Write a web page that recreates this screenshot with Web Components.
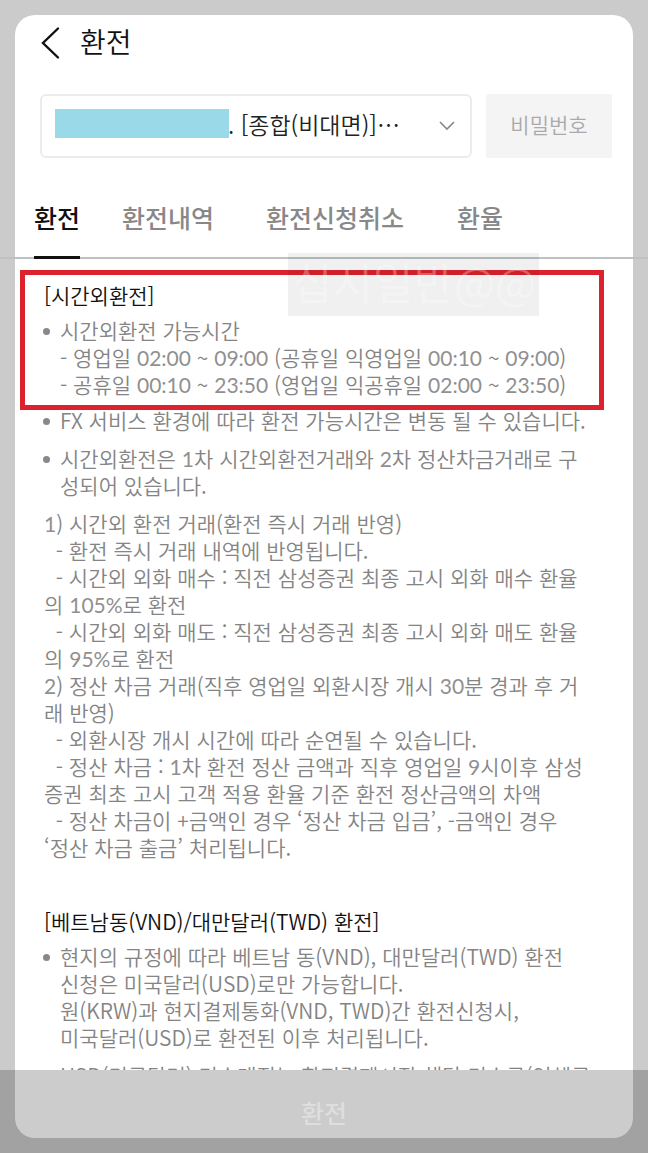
<!DOCTYPE html>
<html lang="ko">
<head>
<meta charset="utf-8">
<meta name="viewport" content="width=device-width, initial-scale=1">
<title>환전</title>
<style>
  body { margin: 0; font-family: "Noto Sans CJK KR", sans-serif; color: #848484; background: #cbcbcb; }
</style>
</head>
<body>
<fx-screen>
  <fx-header slot="header">환전</fx-header>
  <fx-account slot="header"></fx-account>
  <fx-tabs slot="header"></fx-tabs>
  <fx-section marked>
    <span slot="title">[시간외환전]</span>
    <fx-item>시간외환전 가능시간<br>- 영업일 02:00 ~ 09:00 (공휴일 익영업일 00:10 ~ 09:00)<br>- 공휴일 00:10 ~ 23:50 (영업일 익공휴일 02:00 ~ 23:50)</fx-item>
  </fx-section>
  <fx-section>
    <fx-item>FX 서비스 환경에 따라 환전 가능시간은 변동 될 수 있습니다.</fx-item>
    <fx-item>시간외환전은 1차 시간외환전거래와 2차 정산차금거래로 구<br>성되어 있습니다.</fx-item>
    <fx-item plain>1) 시간외 환전 거래(환전 즉시 거래 반영)<br>&nbsp; - 환전 즉시 거래 내역에 반영됩니다.<br>&nbsp; - 시간외 외화 매수 : 직전 삼성증권 최종 고시 외화 매수 환율<br>의 105%로 환전<br>&nbsp; - 시간외 외화 매도 : 직전 삼성증권 최종 고시 외화 매도 환율<br>의 95%로 환전<br>2) 정산 차금 거래(직후 영업일 외환시장 개시 30분 경과 후 거<br>래 반영)<br>&nbsp; - 외환시장 개시 시간에 따라 순연될 수 있습니다.<br>&nbsp; - 정산 차금 : 1차 환전 정산 금액과 직후 영업일 9시이후 삼성<br>증권 최초 고시 고객 적용 환율 기준 환전 정산금액의 차액<br>&nbsp; - 정산 차금이 +금액인 경우 ‘정산 차금 입금’, -금액인 경우<br>‘정산 차금 출금’ 처리됩니다.</fx-item>
  </fx-section>
  <fx-section spaced>
    <span slot="title">[베트남동(VND)/대만달러(TWD) 환전]</span>
    <fx-item>현지의 규정에 따라 베트남 동(VND), 대만달러(TWD) 환전<br>신청은 미국달러(USD)로만 가능합니다.<br>원(KRW)과 현지결제통화(VND, TWD)간 환전신청시,<br>미국달러(USD)로 환전된 이후 처리됩니다.</fx-item>
    <fx-item continued>USD(미국달러) 미수매직는 환전결제시장 해당 미수금(연체금</fx-item>
  </fx-section>
  <fx-toast slot="overlay">십시일반@@</fx-toast>
  <fx-submit slot="overlay">환전</fx-submit>
</fx-screen>
<script>
const define = (name, html, setup) => {
  const template = document.createElement('template');
  template.innerHTML = html;
  customElements.define(name, class extends HTMLElement {
    constructor() {
      super();
      this.attachShadow({ mode: 'open' }).append(template.content.cloneNode(true));
    }
    connectedCallback() {
      if (setup) setup(this);
    }
  });
};

define('fx-screen', `
<style>
  :host { display: flex; height: 100vh; box-sizing: border-box; padding: 15px; position: relative; overflow: hidden; }
  .card { flex: 1; min-width: 0; display: flex; flex-direction: column; background: #fff; border-radius: 20px; padding-bottom: 68px; box-sizing: border-box; }
  main { flex: 1; min-height: 0; overflow: hidden; padding: 23px 20px 0 29px; }
</style>
<div class="card"><slot name="header"></slot><main><slot></slot></main></div>
<slot name="overlay"></slot>`);

define('fx-header', `
<style>
  :host { display: flex; align-items: center; gap: 20px; height: 56px; padding-left: 25px; color: #111; }
  button { border: 0; padding: 0; background: none; width: 20px; height: 34px; display: block; }
  svg { display: block; }
  h1 { margin: 0; padding-bottom: 4px; font: 350 28px/36px "Noto Sans CJK KR", sans-serif; }
</style>
<button type="button" aria-label="뒤로"><svg width="20" height="34" viewBox="0 0 20 34" fill="none" stroke="#111" stroke-width="2.4" stroke-linecap="round"><path d="M18 2.500 3 17l15 14.500"/></svg></button>
<h1><slot></slot></h1>`);

define('fx-account', `
<style>
  :host { display: flex; gap: 14px; padding: 23px 21px 0 25px; }
  .pick { flex: 1; position: relative; min-width: 0; }
  select, input { display: block; width: 100%; height: 64px; box-sizing: border-box; margin: 0; font: 350 23px "Noto Sans CJK KR", sans-serif; }
  select { appearance: none; border: 2px solid #ececec; border-radius: 6px; background: #fff; padding: 0 60px 4px 186px; color: #222; opacity: 1; }
  .mask { position: absolute; left: 15px; top: 15px; width: 174px; height: 29px; background: #9ad9e8; }
  svg { position: absolute; right: 16px; top: 26px; }
  input { width: 126px; border: 0; border-radius: 2px; background: #f4f4f4; padding: 0 0 4px; text-align: center; font-size: 21px; }
  input::placeholder { color: #aaa; opacity: 1; }
</style>
<div class="pick">
  <select aria-label="계좌"><option>. [종합(비대면)]…</option></select>
  <span class="mask"></span>
  <svg width="18" height="12" viewBox="0 0 18 12" fill="none" stroke="#888" stroke-width="1.6"><path d="M2 2l7 7 7-7"/></svg>
</div>
<input type="password" placeholder="비밀번호" aria-label="비밀번호">`);

define('fx-tabs', `
<style>
  :host { display: block; margin: 34px -15px 0; padding: 0 34px; border-bottom: 2px solid #bcc2c2; }
  nav { display: grid; grid-template-columns: 88px 144px 191px auto; justify-content: start; justify-items: start; margin-bottom: -2px; }
  a { color: #888; text-decoration: none; font: 500 25px/50px "Noto Sans CJK KR", sans-serif; height: 64px; border-bottom: 3px solid transparent; white-space: nowrap; }
  a[aria-current] { color: #111; border-color: #111; }
</style>
<nav><a href="#exchange" aria-current="page">환전</a><a href="#history">환전내역</a><a href="#cancel">환전신청취소</a><a href="#rate">환율</a></nav>`);

define('fx-section', `
<style>
  :host { display: block; position: relative; margin-bottom: 9px; }
  :host([spaced]) { margin-top: 47px; }
  h2 { margin: 0 0 8px; color: #111; font: inherit; font-weight: 350; font-size: 21px; line-height: 27px; }
  .body { display: flex; flex-direction: column; gap: 11px; }
  .mark { display: none; }
  :host([marked]) .mark { display: block; position: absolute; inset: -12px 9px -12px -24px; border: 5px solid #dc222c; }
</style>
<div class="head"></div><div class="body"><slot></slot></div><div class="mark"></div>`, (section) => {
  if (section.querySelector('[slot="title"]')) {
    const heading = document.createElement('h2');
    heading.innerHTML = '<slot name="title"></slot>';
    section.shadowRoot.querySelector('.head').append(heading);
  }
});

// Figures are set in Lato, the running text in the Korean face.
define('fx-item', `
<style>
  :host { display: block; position: relative; padding-left: 16px; font-size: 21px; line-height: 27px; font-weight: 350; white-space: nowrap; }
  :host([plain]) { padding-left: 0; }
  :host::before { content: ""; position: absolute; left: -1px; top: 11px; width: 7px; height: 7px; border-radius: 50%; background: #888; }
  :host([plain])::before, :host([continued])::before { display: none; }
  ::slotted(span) { font-family: Lato, sans-serif; font-weight: 400; line-height: 1; color: #909090; }
</style>
<slot></slot>`, (item) => {
  item.innerHTML = item.innerHTML.replace(/\d[\d:%]*/g, '<span>$&</span>');
});

define('fx-toast', `
<style>
  :host { display: block; position: absolute; left: 288px; top: 253px; width: 251px; height: 63px; box-sizing: border-box; padding-left: 4px; background: rgba(0,0,0,.06); color: rgba(255,255,255,.3); font: 350 44px/56px "Noto Sans CJK KR", sans-serif; white-space: nowrap; }
</style>
<slot></slot>`);

define('fx-submit', `
<style>
  :host { display: block; position: absolute; left: 0; right: 0; bottom: 0; height: 83px; }
  button { display: block; width: 100%; height: 100%; border: 0; padding: 0; background: rgba(0,0,0,.2); color: #dedede; font: 500 25px "Noto Sans CJK KR", sans-serif; }
</style>
<button type="button"><slot></slot></button>`);
</script>
</body>
</html>
